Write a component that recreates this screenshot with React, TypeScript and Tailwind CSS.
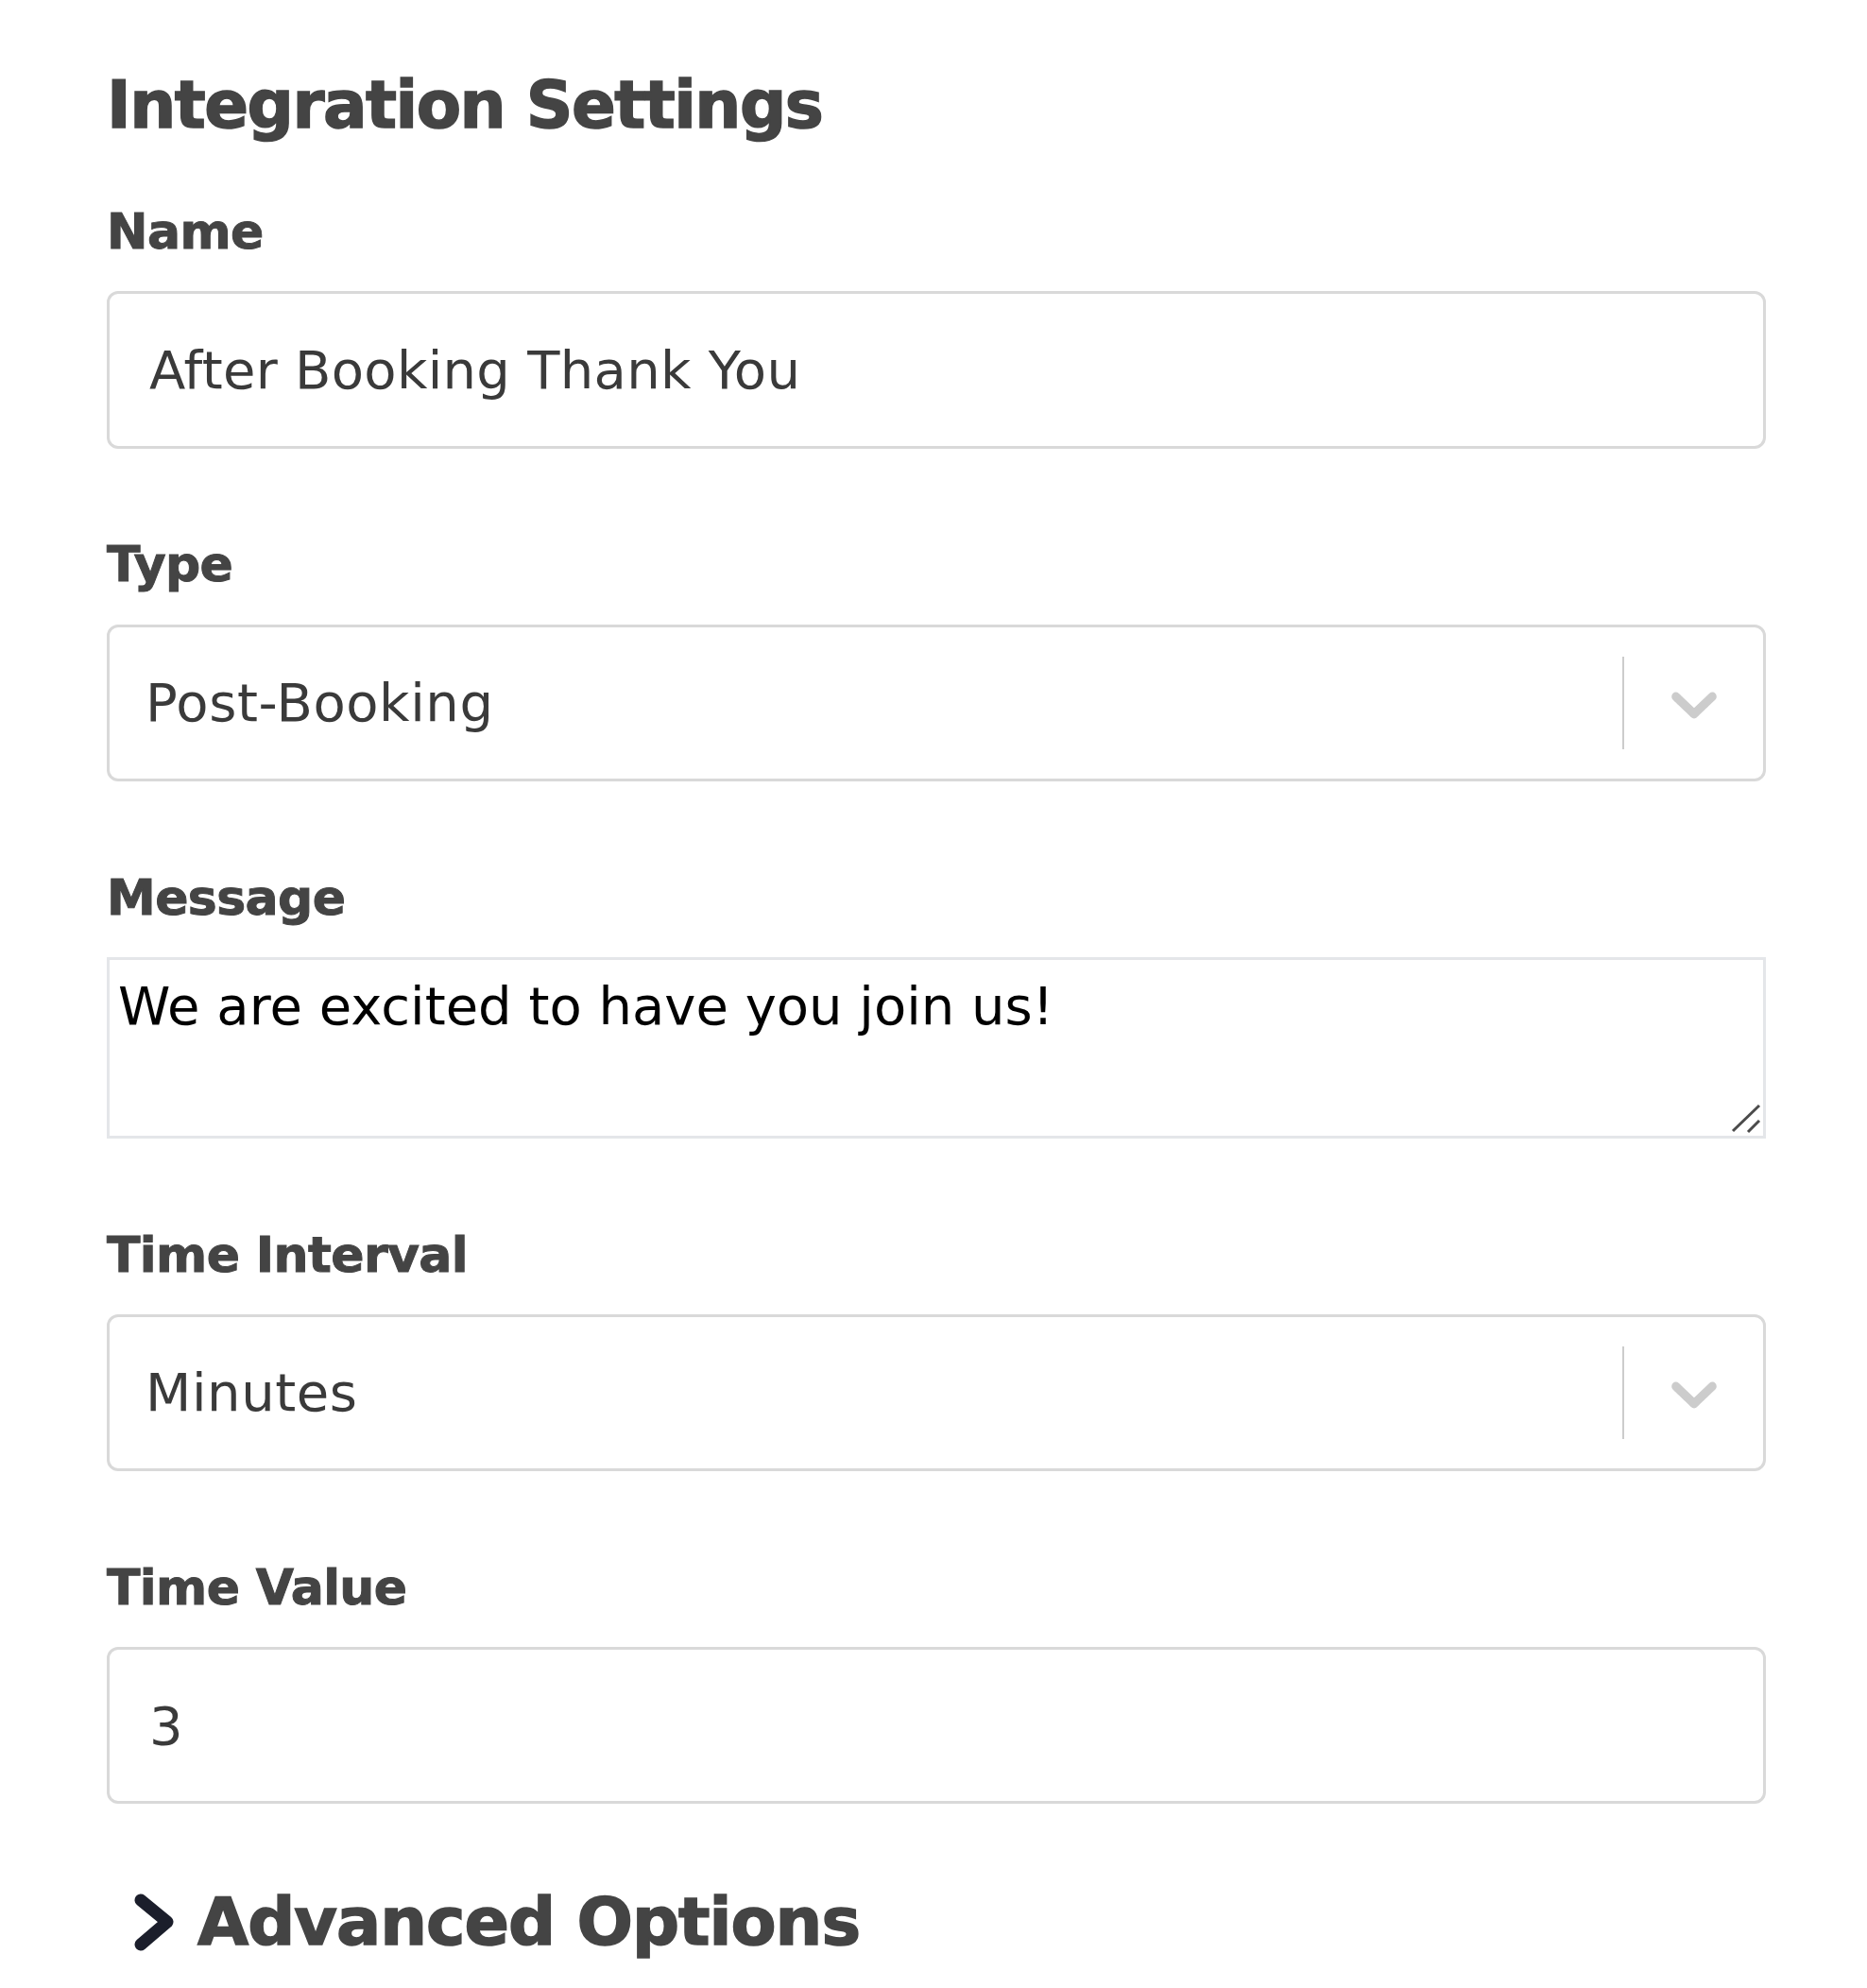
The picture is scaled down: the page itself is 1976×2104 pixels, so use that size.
import React from "react";

const fieldFont = "font-['DejaVu_Sans',sans-serif]";

function Label({ children }: { children: React.ReactNode }) {
  return (
    <div className="h-[52px] text-[52px] leading-[52px] font-bold text-[#444444] tracking-[-0.6px] [-webkit-text-stroke:1px_#444444]">
      {children}
    </div>
  );
}

function ChevronDown() {
  return (
    <svg viewBox="0 0 20 20" className="h-[82px] w-[82px]" fill="#cccccc" aria-hidden="true">
      <path d="M4.516 7.548c0.436-0.446 1.043-0.481 1.576 0l3.908 3.747 3.908-3.747c0.533-0.481 1.141-0.446 1.574 0 0.436 0.445 0.408 1.197 0 1.615-0.406 0.418-4.695 4.502-4.695 4.502-0.217 0.223-0.502 0.335-0.787 0.335s-0.57-0.112-0.789-0.335c0 0-4.287-4.084-4.695-4.502s-0.436-1.17 0-1.615z" />
    </svg>
  );
}

function TextInput({ value, height }: { value: string; height: string }) {
  return (
    <input
      readOnly
      defaultValue={value}
      className={`block w-full ${height} rounded-[12px] border-[3px] border-[#d9d9d9] bg-white pl-[42px] text-[56px] tracking-[0.3px] text-[#3a3a3a] outline-none`}
    />
  );
}

function SelectBox({ value }: { value: string }) {
  return (
    <div className="flex h-[166px] w-full items-center rounded-[12px] border-[3px] border-[#d9d9d9] bg-white">
      <div className="flex-1 pl-[38px] text-[56px] tracking-[0.6px] text-[#3a3a3a]">{value}</div>
      <div className="h-[98px] w-[2px] bg-[#cccccc]" />
      <div className="flex w-[147px] items-center justify-center">
        <ChevronDown />
      </div>
    </div>
  );
}

export default function App() {
  return (
    <div className={`min-h-screen bg-white pl-[113px] pr-[107px] pt-[77px] ${fieldFont}`}>
      <h1 className="h-[69px] text-[69px] leading-[69px] font-bold text-[#444444] tracking-[-1.5px] [-webkit-text-stroke:1.5px_#444444]">
        Integration Settings
      </h1>

      <div className="mt-[73px]">
        <Label>Name</Label>
        <div className="mt-[37px]">
          <TextInput value="After Booking Thank You" height="h-[167px]" />
        </div>
      </div>

      <div className="mt-[96px]">
        <Label>Type</Label>
        <div className="mt-[38px]">
          <SelectBox value="Post-Booking" />
        </div>
      </div>

      <div className="mt-[97px]">
        <Label>Message</Label>
        <div className="relative mt-[37px]">
          <textarea
            readOnly
            defaultValue="We are excited to have you join us!"
            className="block h-[192px] w-full resize-none border-[3px] border-[#e4e6e9] bg-white pl-[9px] pt-[16px] text-[56px] leading-[66px] text-black outline-none"
          />
          <svg
            viewBox="0 0 40 40"
            className="pointer-events-none absolute bottom-0 right-0 h-[40px] w-[40px]"
            stroke="#4b4b4b"
            strokeWidth="3"
            aria-hidden="true"
          >
            <line x1="5" y1="32" x2="33" y2="5" />
            <line x1="21" y1="33" x2="33" y2="21" />
          </svg>
        </div>
      </div>

      <div className="mt-[97px]">
        <Label>Time Interval</Label>
        <div className="mt-[37px]">
          <SelectBox value="Minutes" />
        </div>
      </div>

      <div className="mt-[97px]">
        <Label>Time Value</Label>
        <div className="mt-[37px]">
          <TextInput value="3" height="h-[166px]" />
        </div>
      </div>

      <button className="mt-[90px] flex items-center gap-[24px] pl-[22px]">
        <svg viewBox="0 0 50 67" className="h-[67px] w-[50px]" fill="none" aria-hidden="true">
          <polyline
            points="14,10 42,33 14,57"
            stroke="#1b1e2b"
            strokeWidth="13"
            strokeLinecap="round"
            strokeLinejoin="round"
          />
        </svg>
        <span className="text-[70px] leading-[70px] font-bold text-[#444444] tracking-[-1px] [-webkit-text-stroke:1.5px_#444444]">
          Advanced Options
        </span>
      </button>
    </div>
  );
}
